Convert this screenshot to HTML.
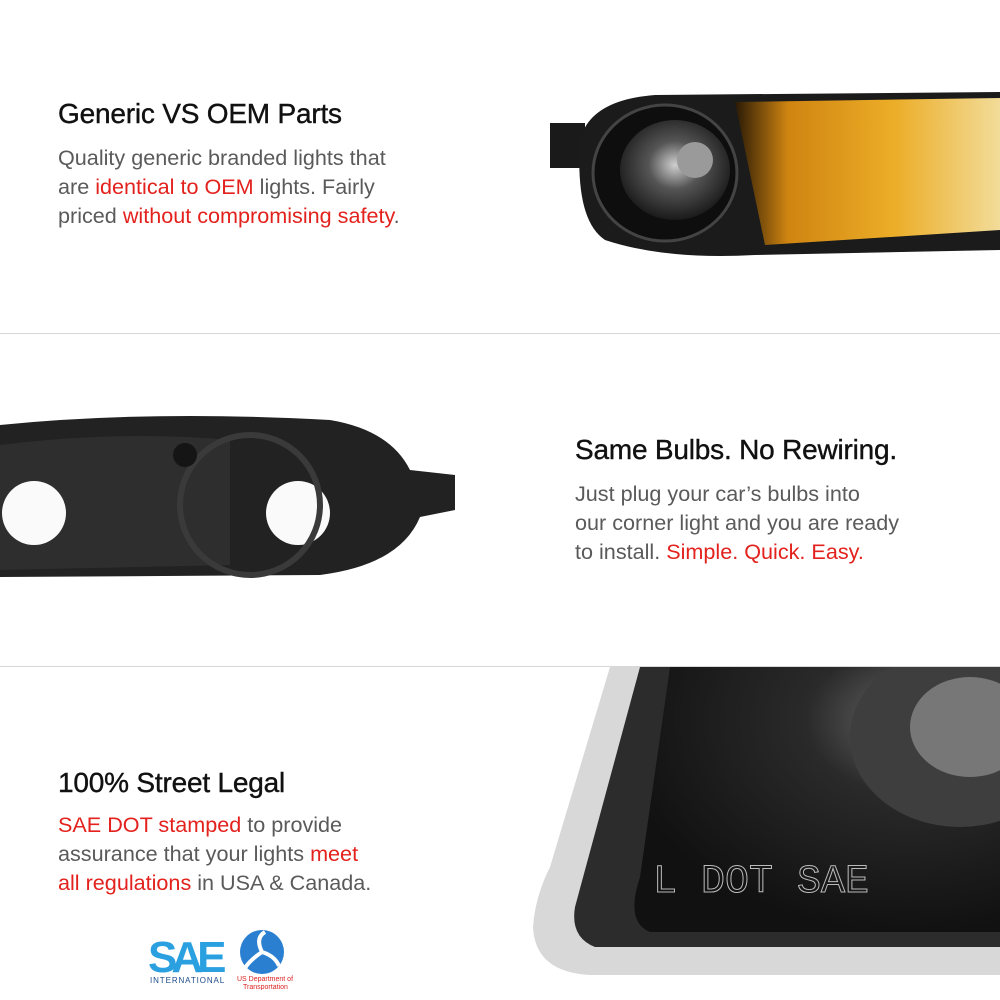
<!DOCTYPE html>
<html><head><style>
html,body{margin:0;padding:0;background:#fff;width:1000px;height:1000px;overflow:hidden;position:relative;font-family:"Liberation Sans",Arial,sans-serif}
.h{position:absolute;font-size:28px;color:#111;letter-spacing:-0.2px;-webkit-text-stroke:0.4px #111}
.p{position:absolute;font-size:21.6px;line-height:29px;color:#5a5a5a}
.r{color:#e3211d}
.line{position:absolute;left:0;width:1000px;height:1px;background:#d8d8d8}
svg{position:absolute}
</style></head><body>
<div class="h" style="left:58px;top:98px">Generic VS OEM Parts</div>
<div class="p" style="left:58px;top:143px">Quality generic branded lights that<br>are <span class="r">identical to OEM</span> lights. Fairly<br>priced <span class="r">without compromising safety</span>.</div>

<svg style="left:545px;top:80px" width="455" height="185" viewBox="0 0 455 185">
<defs><linearGradient id="am" x1="0" x2="1"><stop offset="0" stop-color="#2a1a05"/><stop offset=".2" stop-color="#d98a10"/><stop offset=".6" stop-color="#f7b528"/><stop offset="1" stop-color="#fde6a0"/></linearGradient>
<radialGradient id="lens" cx=".5" cy=".45" r=".6"><stop offset="0" stop-color="#cfcfcf"/><stop offset=".4" stop-color="#555"/><stop offset="1" stop-color="#111"/></radialGradient></defs>
<path d="M5 43 L40 43 L40 88 L5 88 Z" fill="#1a1a1a"/>
<path d="M35 60 Q45 20 110 15 L455 12 L455 170 L210 175 Q120 180 60 160 Q30 140 35 60 Z" fill="#1b1b1b"/>
<path d="M190 22 L455 18 L455 150 L220 165 Z" fill="url(#am)" opacity=".95"/>
<ellipse cx="120" cy="93" rx="72" ry="68" fill="#0e0e0e" stroke="#444" stroke-width="3"/>
<ellipse cx="130" cy="90" rx="55" ry="50" fill="url(#lens)"/>
<circle cx="150" cy="80" r="18" fill="#9a9a9a"/>
</svg>

<div class="line" style="top:333px"></div>

<svg style="left:0;top:405px" width="470" height="185" viewBox="0 0 470 185">
<path d="M0 20 Q150 5 330 15 Q390 25 410 65 L455 70 L455 105 L420 112 Q400 160 320 170 L0 172 Z" fill="#222"/>
<path d="M0 40 Q120 25 230 35 L230 160 L0 165 Z" fill="#2e2e2e"/>
<circle cx="34" cy="108" r="32" fill="#fafafa"/>
<circle cx="298" cy="108" r="32" fill="#fafafa"/>
<circle cx="250" cy="100" r="70" fill="none" stroke="#3a3a3a" stroke-width="6"/>
<circle cx="185" cy="50" r="12" fill="#151515"/>
</svg>

<div class="h" style="left:575px;top:434px">Same Bulbs. No Rewiring.</div>
<div class="p" style="left:575px;top:479px">Just plug your car’s bulbs into<br>our corner light and you are ready<br>to install. <span class="r">Simple. Quick. Easy.</span></div>

<div class="line" style="top:666px"></div>

<div class="h" style="left:58px;top:767px">100% Street Legal</div>
<div class="p" style="left:58px;top:810px"><span class="r">SAE DOT stamped</span> to provide<br>assurance that your lights <span class="r">meet</span><br><span class="r">all regulations</span> in USA &amp; Canada.</div>

<svg style="left:530px;top:667px" width="470" height="310" viewBox="0 0 470 310">
<defs><radialGradient id="bg3" cx=".75" cy=".2" r=".8"><stop offset="0" stop-color="#666"/><stop offset=".35" stop-color="#2a2a2a"/><stop offset="1" stop-color="#111"/></radialGradient></defs>
<path d="M80 0 L470 0 L470 308 L60 308 Q5 305 3 260 Q5 230 20 200 Z" fill="#d8d8d8"/>
<path d="M110 0 L470 0 L470 280 L65 280 Q40 270 45 240 Z" fill="#2c2c2c"/>
<path d="M140 0 L470 0 L470 265 L120 265 Q95 255 110 210 Z" fill="url(#bg3)"/>
<ellipse cx="430" cy="70" rx="110" ry="90" fill="#3e3e3e"/>
<ellipse cx="440" cy="60" rx="60" ry="50" fill="#777"/>
<text x="123" y="225" font-family="Liberation Mono,monospace" font-size="40" fill="none" stroke="#bbb" stroke-width="1">L DOT SAE</text>
</svg>

<svg style="left:148px;top:928px" width="80" height="58" viewBox="0 0 80 58">
<text x="0" y="44" font-family="Liberation Sans,sans-serif" font-weight="bold" font-size="44" fill="#2aa0e0" letter-spacing="-6">SAE</text>
<text x="2" y="55" font-family="Liberation Sans,sans-serif" font-size="8" fill="#1a4a8a" letter-spacing="0.9">INTERNATIONAL</text>
</svg>
<svg style="left:235px;top:928px" width="60" height="62" viewBox="0 0 60 62">
<circle cx="27" cy="24" r="22" fill="#2a7fd0"/>
<path d="M27 24 Q20 10 30 4 M27 24 Q40 28 44 38 M27 24 Q15 32 10 40" stroke="#fff" stroke-width="4" fill="none"/>
<text x="2" y="53" font-family="Liberation Sans,sans-serif" font-size="7" fill="#d22">US Department of</text>
<text x="8" y="61" font-family="Liberation Sans,sans-serif" font-size="7" fill="#d22">Transportation</text>
</svg>
</body></html>
